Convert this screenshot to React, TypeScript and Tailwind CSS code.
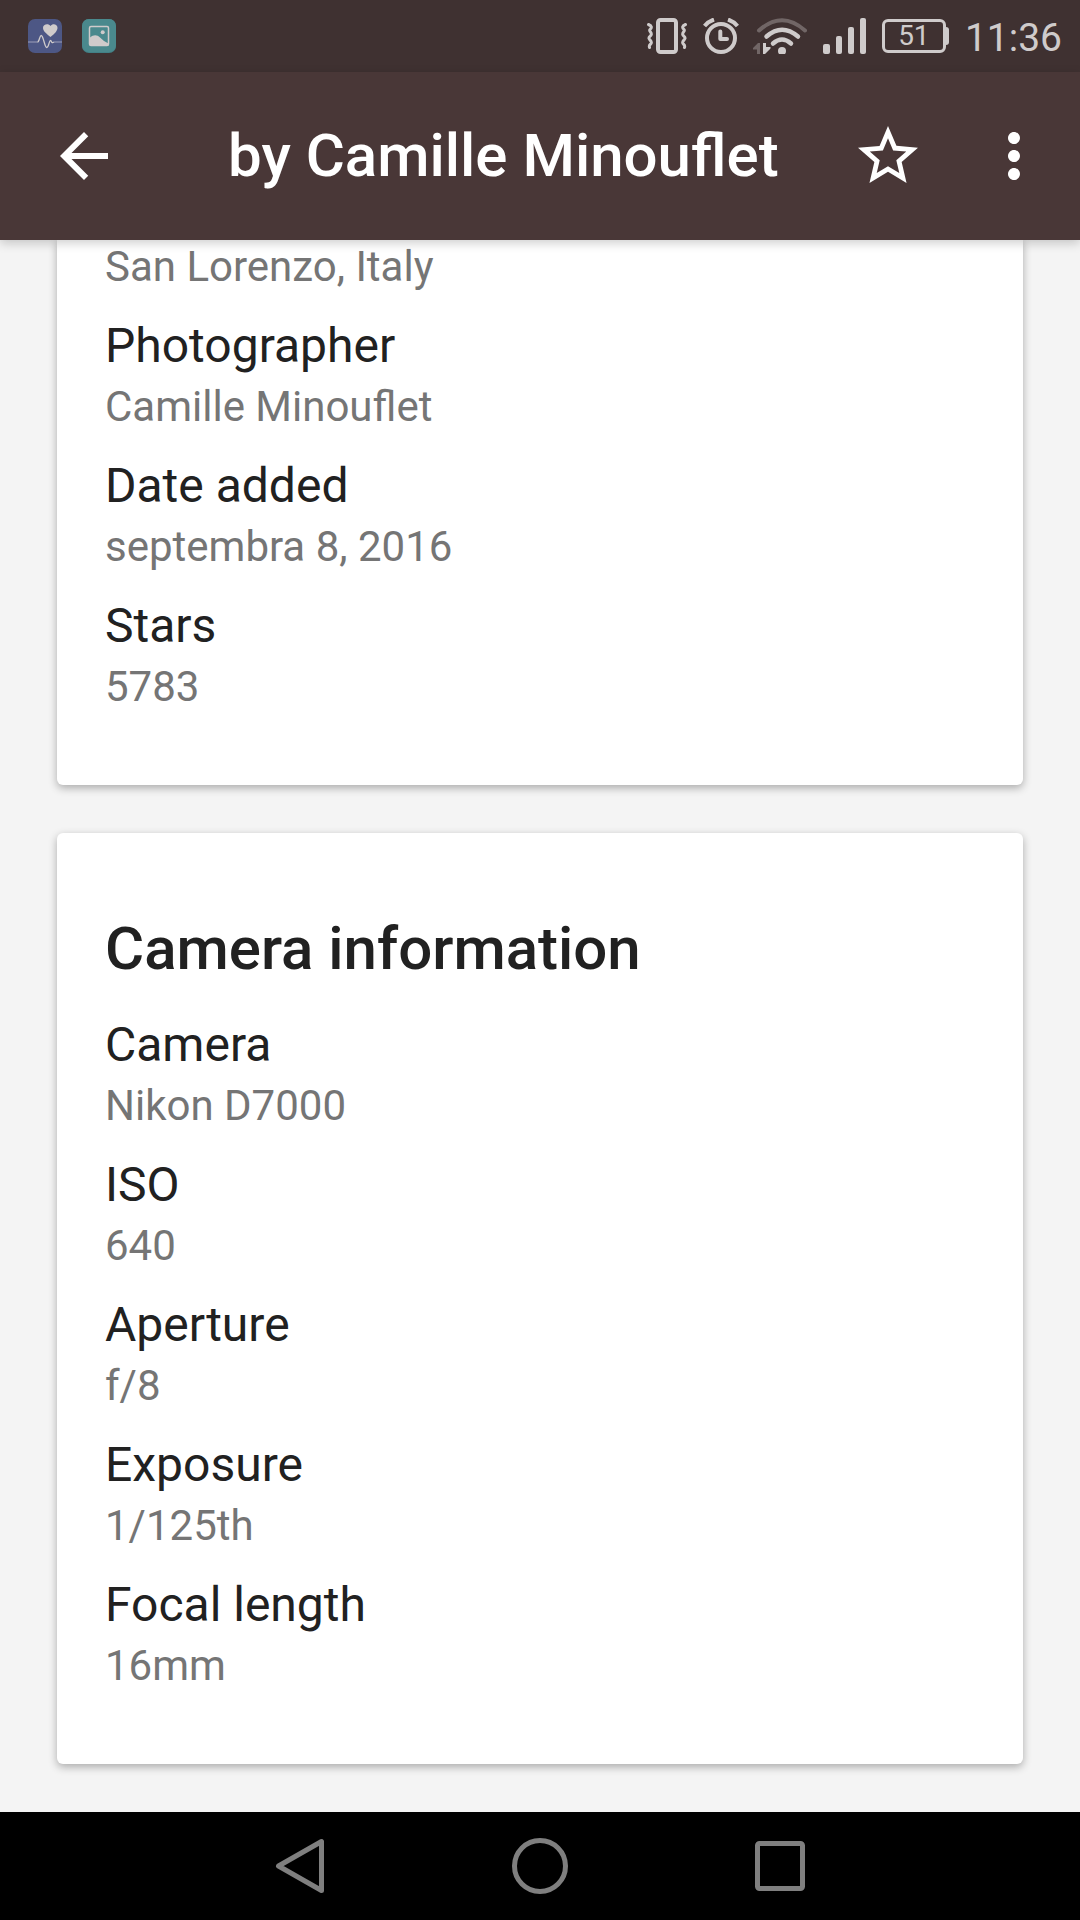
import { MdArrowBack, MdMoreVert, MdStarBorder } from 'react-icons/md'

type Detail = { label?: string; value: string }

const photoDetails: Detail[] = [
  { value: 'San Lorenzo, Italy' },
  { label: 'Photographer', value: 'Camille Minouflet' },
  { label: 'Date added', value: 'septembra 8, 2016' },
  { label: 'Stars', value: '5783' },
]

const cameraDetails: Detail[] = [
  { label: 'Camera', value: 'Nikon D7000' },
  { label: 'ISO', value: '640' },
  { label: 'Aperture', value: 'f/8' },
  { label: 'Exposure', value: '1/125th' },
  { label: 'Focal length', value: '16mm' },
]

function HealthIcon() {
  return (
    <svg width="34" height="34" viewBox="0 0 34 34" fill="none">
      <rect width="34" height="34" rx="7" fill="#4d5785" />
      <path d="M22.5 18C18 14.500 15 12 15 8.800C15 5 20.500 4 22.500 7C24.500 4 29.500 5 29.500 8.800C29.500 12 26.500 15 22.500 18Z" fill="#cfcbcb" />
      <path d="M0 23h9.500M26 23h8" stroke="#8288a8" strokeWidth="1.5" />
      <path d="M9.500 23C11.500 23 11.500 16.500 13.200 16.500C15.500 16.500 16.500 28.500 18.800 28.500C20.800 28.500 21 21.500 22.500 21.500C23.700 21.500 23.500 24.500 25 23.500L26 23" stroke="#cfcbcb" strokeWidth="1.3" />
    </svg>
  )
}

function GalleryIcon() {
  return (
    <svg width="34" height="34" viewBox="0 0 34 34" fill="none">
      <rect width="34" height="34" rx="7" fill="#428086" />
      <rect width="34" height="33" rx="7" fill="#4a898d" />
      <rect x="7.500" y="7.500" width="19" height="19" rx="1.500" stroke="#cfcbcb" strokeWidth="1.500" />
      <circle cx="20.700" cy="13.300" r="2" fill="#cfcbcb" />
      <path d="M8 18.500C11.500 15.500 15 15.500 18 18.500L22 22L26.500 24.500V26.500H8Z" fill="#cfcbcb" />
    </svg>
  )
}

function VibrateIcon() {
  return (
    <svg width="40" height="36" viewBox="0 0 40 36" fill="none" stroke="currentColor">
      <rect x="11" y="2" width="18" height="32" rx="2.500" strokeWidth="4" />
      <path d="M1.500 6.500C5 8 5 9.500 3 11.500C1.500 13 4.800 14.500 4.300 16.500C4 18 1.500 18.500 2 20.500C2.400 22 4.800 23 4.300 25C4 26.500 1.500 26.500 2.500 29.500" strokeWidth="3" strokeLinecap="round" />
      <path d="M38.500 6.500C35 8 35 9.500 37 11.500C38.500 13 35.200 14.500 35.700 16.500C36 18 38.500 18.500 38 20.500C37.600 22 35.200 23 35.700 25C36 26.500 38.500 26.500 37.500 29.500" strokeWidth="3" strokeLinecap="round" />
    </svg>
  )
}

function AlarmIcon() {
  return (
    <svg width="36" height="36" viewBox="0 0 36 36" fill="none" stroke="currentColor">
      <circle cx="18" cy="20" r="14" strokeWidth="4" />
      <path d="M17.300 13.500V21H24" strokeWidth="4" strokeLinecap="round" strokeLinejoin="round" />
      <path d="M1.500 8Q5 3.500 11 1.500M34.500 8Q31 3.500 25 1.500" strokeWidth="4" />
    </svg>
  )
}

function WifiIcon() {
  return (
    <svg width="54" height="36" viewBox="0 0 54 36" fill="none" stroke="currentColor" strokeLinecap="round">
      <path d="M6 12.500Q29 -8 52 12.500" strokeWidth="4" opacity="0.350" />
      <path d="M13.500 18.500Q29 5 45 18.500" strokeWidth="4.500" />
      <path d="M20 25.500Q29 17.500 38 25.500" strokeWidth="4.500" />
      <circle cx="29" cy="33" r="4" fill="currentColor" stroke="none" />
      <path d="M0 30L5 25H7V36H4V31.500H0Z" fill="currentColor" stroke="none" opacity="0.350" />
      <path d="M10 25H13V29H17.500V30.500L12 36H10Z" fill="currentColor" stroke="none" />
    </svg>
  )
}

function SignalIcon() {
  return (
    <svg width="43" height="36" viewBox="0 0 43 36" fill="currentColor">
      <rect x="0" y="26" width="7" height="10" rx="2" />
      <rect x="13" y="18" width="6" height="18" rx="2" />
      <rect x="25" y="9" width="6" height="27" rx="2" />
      <rect x="37" y="0" width="6" height="36" rx="2" />
    </svg>
  )
}

function StatusBar() {
  return (
    <div className="flex h-[72px] shrink-0 items-center justify-between bg-[#3f3131] pr-[18px] pl-7 text-[#cfcbcb]">
      <div className="flex gap-5">
        <HealthIcon />
        <GalleryIcon />
      </div>
      <div className="flex items-center gap-4">
        <div className="flex items-center gap-[14px]">
          <div className="flex items-center gap-4">
            <VibrateIcon />
            <AlarmIcon />
          </div>
          <WifiIcon />
        </div>
        <SignalIcon />
        <div className="flex items-center">
          <div className="flex h-[34px] w-16 items-center justify-center rounded-md border-3 border-current text-[28px] leading-[28px]">
            51
          </div>
          <div className="h-[18px] w-[3px] rounded-r-sm bg-current" />
        </div>
        <time className="pt-1 text-[39px] leading-[48px]">11:36</time>
      </div>
    </div>
  )
}

function AppBar() {
  return (
    <header className="z-10 flex h-[168px] shrink-0 items-center bg-[#493737] pr-[30px] pl-12 text-white shadow-[0_3px_10px_rgba(0,0,0,0.2)]">
      <button type="button" aria-label="Back">
        <MdArrowBack className="size-[72px]" />
      </button>
      <h1 className="ml-[108px] flex-1 truncate text-[60px] leading-[72px] font-medium">by Camille Minouflet</h1>
      <button type="button" aria-label="Star">
        <MdStarBorder className="size-[72px]" />
      </button>
      <button type="button" aria-label="More options" className="ml-[54px]">
        <MdMoreVert className="size-[72px]" />
      </button>
    </header>
  )
}

function DetailList({ items }: { items: Detail[] }) {
  return (
    <dl className="flex flex-col gap-[18px]">
      {items.map((item) => (
        <div key={item.value}>
          {item.label && <dt className="text-[48px] leading-[66px] text-[#212121]">{item.label}</dt>}
          <dd className="text-[42px] leading-[56px] text-[#757575]">{item.value}</dd>
        </div>
      ))}
    </dl>
  )
}

function NavBar() {
  return (
    <nav className="flex h-[108px] shrink-0 items-center justify-center bg-black text-[#7f7f7f]">
      <button type="button" aria-label="Back" className="flex w-[240px] justify-center">
        <svg width="60" height="60" viewBox="0 0 60 60" fill="none" stroke="currentColor" strokeWidth="5" strokeLinejoin="round">
          <path d="M51.500 5.500V54.500L8.500 30Z" />
        </svg>
      </button>
      <button type="button" aria-label="Home" className="flex w-[240px] justify-center">
        <svg width="60" height="60" viewBox="0 0 60 60" fill="none" stroke="currentColor" strokeWidth="5">
          <circle cx="30" cy="30" r="25.500" />
        </svg>
      </button>
      <button type="button" aria-label="Recent apps" className="flex w-[240px] justify-center">
        <svg width="60" height="60" viewBox="0 0 60 60" fill="none" stroke="currentColor" strokeWidth="5">
          <rect x="7.500" y="7.500" width="45" height="45" rx="2" />
        </svg>
      </button>
    </nav>
  )
}

export default function App() {
  return (
    <div className="flex h-screen flex-col bg-[#f4f4f4] font-[Roboto,sans-serif]">
      <StatusBar />
      <AppBar />

      {/* scrolled to the end, so the first card runs under the app bar */}
      <main className="flex min-h-0 flex-1 flex-col justify-end gap-12 overflow-hidden px-[57px] pb-12">
        <section className="shrink-0 rounded-b-md bg-white px-12 pb-[70px] shadow-[0_3px_8px_rgba(0,0,0,0.3)]">
          <DetailList items={photoDetails} />
        </section>

        <section className="shrink-0 rounded-md bg-white px-12 pt-20 pb-[70px] shadow-[0_3px_8px_rgba(0,0,0,0.3)]">
          <h2 className="mb-[27px] text-[60px] leading-[72px] font-medium text-[#212121]">Camera information</h2>
          <DetailList items={cameraDetails} />
        </section>
      </main>

      <NavBar />
    </div>
  )
}
